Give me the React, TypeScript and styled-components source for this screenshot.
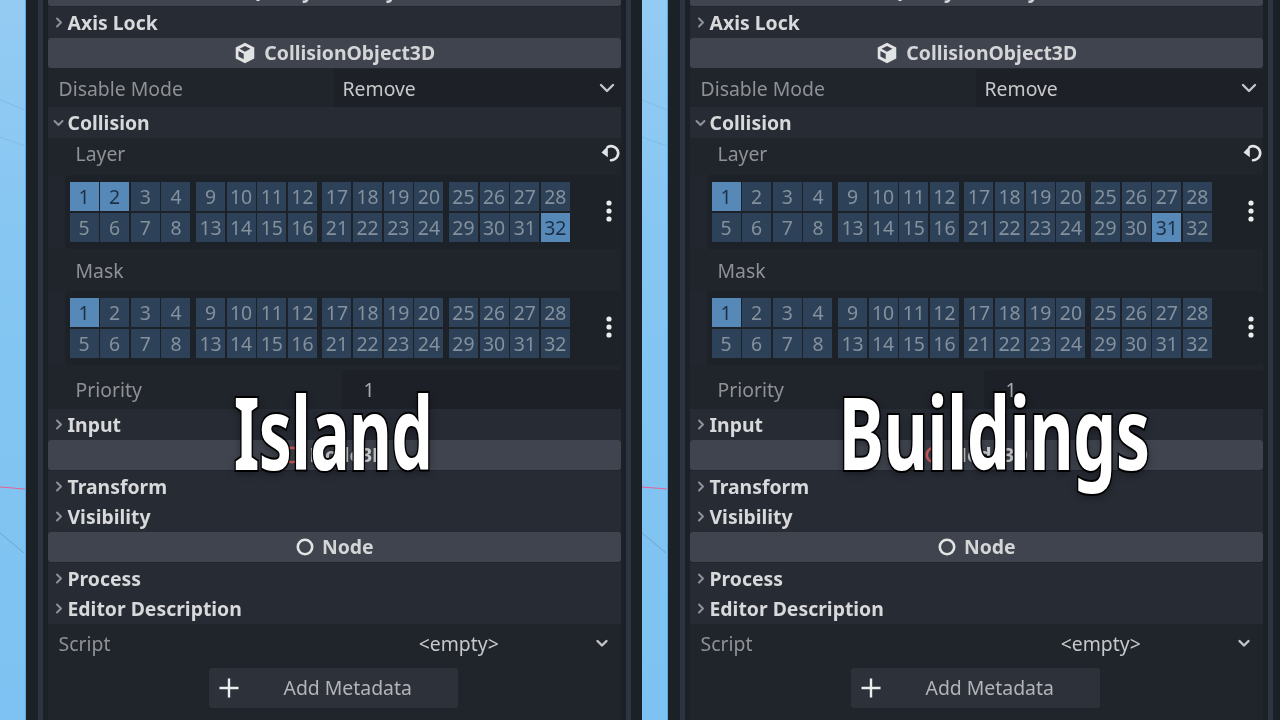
import React from "react";
import styled, { createGlobalStyle } from "styled-components";

const Global = createGlobalStyle`
  html, body { margin: 0; padding: 0; background: #1c2027; }
  body { width: 1280px; height: 720px; overflow: hidden; font-family: "Noto Sans", sans-serif; }
`;

const Page = styled.div`
  display: flex;
  width: 1284px;
  height: 720px;
  overflow: hidden;
`;

const Shot = styled.div`
  position: relative;
  display: flex;
  flex: 0 0 642px;
  height: 720px;
  overflow: hidden;
  background: #1c2027;
`;

const Sky = styled.div`
  position: relative;
  flex: 0 0 25px;
  height: 720px;
  background: linear-gradient(180deg, #94cbf3 0%, #85c6f2 35%, #7dc2f2 100%);
  border-right: 1px solid #5ba9e4;
  box-sizing: border-box;
`;

const SkyLines = styled.svg`
  display: block;
  width: 25px;
  height: 720px;
`;

const Strip = styled.div<{ $ml: number }>`
  flex: 0 0 5px;
  margin-left: ${(p) => p.$ml}px;
  height: 720px;
  background: #2d3542;
`;

const Inspector = styled.div`
  flex: 0 0 573.5px;
  margin-left: 4.5px;
  margin-right: 5px;
  margin-top: -23.6px;
  height: 744px;
  display: flex;
  flex-direction: column;
  background: #22262e;
  filter: blur(0.45px);
`;

const Header = styled.div`
  flex: 0 0 30px;
  margin-bottom: 1px;
  display: flex;
  align-items: center;
  justify-content: center;
  gap: 7px;
  background: #40444e;
  border-radius: 3px;
  color: #d4d5d7;
  font-size: 19.4px;
  font-weight: 700;
  line-height: 30px;
`;

const Section = styled.div`
  flex: 0 0 30.5px;
  display: flex;
  align-items: center;
  background: #272b34;
  color: #d8d9db;
  font-size: 19.4px;
  font-weight: 700;
`;

const Caret = styled.svg`
  flex: 0 0 20px;
  width: 20px;
  height: 19px;
  stroke: #8f9196;
  stroke-width: 2;
  fill: none;
  stroke-linecap: round;
  stroke-linejoin: round;
`;

const Prop = styled.div<{ $h: number; $label?: number; $top?: number }>`
  flex: 0 0 ${(p) => p.$h}px;
  box-sizing: border-box;
  padding-top: ${(p) => p.$top ?? 0}px;
  display: grid;
  grid-template-columns: ${(p) => p.$label ?? 286}px 1fr;
  align-items: stretch;
  background: #20242b;
`;

const PropLabel = styled.div<{ $indent?: number }>`
  display: flex;
  align-items: center;
  padding-left: ${(p) => p.$indent ?? 11}px;
  color: #8f9195;
  font-size: 19.4px;
`;

const PropValue = styled.div`
  display: flex;
  align-items: center;
  position: relative;
  padding-left: 9px;
  background: #1d2027;
  color: #c7c8ca;
  font-size: 19.4px;
  border-radius: 3px;
`;

const NumberValue = styled(PropValue)`
  padding-left: 22px;
  color: #a9aaad;
`;

const ResourceValue = styled(PropValue)`
  justify-content: center;
  padding: 0 37px 0 0;
  background: transparent;
`;

const ValueArrow = styled.svg<{ $right: number }>`
  position: absolute;
  right: ${(p) => p.$right}px;
  top: 50%;
  transform: translateY(-50%);
  width: 16px;
  height: 16px;
  fill: none;
  stroke: #c4c5c8;
  stroke-width: 2.4;
  stroke-linecap: round;
  stroke-linejoin: round;
`;

const LabelRow = styled.div<{ $h: number; $bottom?: number }>`
  flex: 0 0 ${(p) => p.$h}px;
  box-sizing: border-box;
  display: flex;
  align-items: center;
  justify-content: space-between;
  padding: 0 0 ${(p) => p.$bottom ?? 0}px 28px;
  background: #20242b;
  color: #8f9195;
  font-size: 19.4px;
`;

const ResetIcon = styled.svg`
  width: 20px;
  height: 20px;
  fill: none;
  stroke: #e2e3e4;
  stroke-width: 2.6;
  stroke-linecap: round;
`;

const LayerPanel = styled.div`
  flex: 0 0 74px;
  box-sizing: border-box;
  margin-left: 17px;
  display: flex;
  align-items: flex-start;
  padding: 6.5px 0 0 5px;
  background: #1d2128;
  border-radius: 3px;
  position: relative;
`;

const Groups = styled.div`
  display: flex;
  gap: 5.5px;
`;

const Group = styled.div`
  display: grid;
  grid-template-columns: repeat(4, 29px);
  grid-auto-rows: 29px;
  gap: 1.67px;
`;

const Bit = styled.div<{ $on?: boolean }>`
  display: flex;
  align-items: center;
  justify-content: center;
  background: ${(p) => (p.$on ? "#5689b8" : "#2d4259")};
  color: ${(p) => (p.$on ? "#1d2f45" : "#84909c")};
  font-size: 19.4px;
  line-height: 29px;
`;

const Kebab = styled.svg`
  position: absolute;
  right: 4px;
  top: 23px;
  width: 16px;
  height: 26px;
  fill: #eceded;
`;

const AddRow = styled.div`
  flex: 1 0 auto;
  display: flex;
  align-items: flex-start;
  padding: 5px 0 0 161px;
  background: #20242b;
`;

const AddButton = styled.div`
  width: 249px;
  height: 40px;
  display: flex;
  align-items: center;
  box-sizing: border-box;
  background: #2d313a;
  border-radius: 3px;
  color: #b3b4b7;
  font-size: 19.4px;
  padding-left: 8px;
`;

const AddLabel = styled.span`
  margin-left: 43px;
`;

const Plus = styled.svg`
  width: 24px;
  height: 24px;
  stroke: #eceded;
  stroke-width: 2.4;
  fill: none;
  flex: none;
`;

const Title = styled.div<{ $cx: number; $sx: number }>`
  position: absolute;
  left: ${(p) => p.$cx}px;
  top: 371px;
  transform: translateX(-50%) scaleX(${(p) => p.$sx});
  font-family: "Noto Sans", sans-serif;
  font-weight: 700;
  font-size: 100px;
  line-height: 120px;
  letter-spacing: -1px;
  white-space: nowrap;
  color: #ffffff;
  -webkit-text-stroke: 4px #000000;
  paint-order: stroke fill;
  text-shadow: 0 3px 10px rgba(0, 0, 0, 0.45);
`;

const ChevronRight = () => (
  <Caret viewBox="0 0 20 19">
    <path d="M9 5.5 13 9.5 9 13.5" />
  </Caret>
);
const ChevronDown = () => (
  <Caret viewBox="0 0 20 19">
    <path d="M6.5 8 10.5 12 14.5 8" />
  </Caret>
);

const CubeIcon = () => (
  <svg width="24" height="24" viewBox="0 0 22 22">
    <path d="M11 1.5 19.5 6v10L11 20.5 2.5 16V6z" fill="#e2e3e4" />
    <path d="M11 4.6 16 7.2 11 9.8 6 7.2z M5 9.2l4.8 2.5v5L5 14.2z" fill="#40444e" />
  </svg>
);

const RingIcon = ({ color }: { color: string }) => (
  <svg width="20" height="20" viewBox="0 0 20 20">
    <circle cx="10" cy="10" r="7.2" fill="none" stroke={color} strokeWidth="2.6" />
  </svg>
);

const groups = [
  [1, 2, 3, 4, 5, 6, 7, 8],
  [9, 10, 11, 12, 13, 14, 15, 16],
  [17, 18, 19, 20, 21, 22, 23, 24],
  [25, 26, 27, 28, 29, 30, 31, 32],
];

const Layers = ({ on }: { on: number[] }) => (
  <LayerPanel>
    <Groups>
      {groups.map((g, i) => (
        <Group key={i}>
          {g.map((n) => (
            <Bit key={n} $on={on.includes(n)}>
              {n}
            </Bit>
          ))}
        </Group>
      ))}
    </Groups>
    <Kebab viewBox="0 0 16 26">
      <circle cx="8" cy="5" r="2.6" />
      <circle cx="8" cy="13" r="2.6" />
      <circle cx="8" cy="21" r="2.6" />
    </Kebab>
  </LayerPanel>
);

const Panel = ({
  layer,
  title,
  cx,
  sx,
}: {
  layer: number[];
  title: string;
  cx: number;
  sx: number;
}) => (
  <Shot>
    <Sky>
      <SkyLines viewBox="0 0 25 720">
        <path d="M0 487 25 489" stroke="#ea5f92" strokeWidth="1.2" fill="none" />
        <path d="M0 533 24 553" stroke="#6a94b8" strokeWidth="1" fill="none" opacity=".7" />
        <path d="M0 100 25 110M0 137 25 146" stroke="#79b4df" strokeWidth="1" fill="none" opacity=".6" />
      </SkyLines>
    </Sky>
    <Strip $ml={12} />
    <Inspector>
      <Header>
        <CubeIcon />
        PhysicsBody3D
      </Header>
      <Section>
        <ChevronRight />
        Axis Lock
      </Section>
      <Header>
        <CubeIcon />
        CollisionObject3D
      </Header>
      <Prop $h={38.5}>
        <PropLabel>Disable Mode</PropLabel>
        <PropValue>
          Remove
          <ValueArrow $right={6} viewBox="0 0 16 16">
            <path d="M2 5 8 11 14 5" />
          </ValueArrow>
        </PropValue>
      </Prop>
      <Section>
        <ChevronDown />
        Collision
      </Section>
      <LabelRow $h={37.5} $bottom={7}>
        Layer
        <ResetIcon viewBox="0 0 20 20">
          <path d="M6.6 4.2A7 7 0 1 1 10 17.2" />
          <path d="M0.5 9.5 6.8 3v11.2z" fill="#e2e3e4" stroke="none" />
        </ResetIcon>
      </LabelRow>
      <Layers on={layer} />
      <LabelRow $h={42}>Mask</LabelRow>
      <Layers on={[1]} />
      <Prop $h={44} $label={294} $top={5}>
        <PropLabel $indent={28}>Priority</PropLabel>
        <NumberValue>1</NumberValue>
      </Prop>
      <Section>
        <ChevronRight />
        Input
      </Section>
      <Header>
        <RingIcon color="#e0605f" />
        Node3D
      </Header>
      <Section>
        <ChevronRight />
        Transform
      </Section>
      <Section>
        <ChevronRight />
        Visibility
      </Section>
      <Header>
        <RingIcon color="#e2e3e4" />
        Node
      </Header>
      <Section>
        <ChevronRight />
        Process
      </Section>
      <Section>
        <ChevronRight />
        Editor Description
      </Section>
      <Prop $h={39}>
        <PropLabel>Script</PropLabel>
        <ResourceValue>
          &lt;empty&gt;
          <ValueArrow $right={11} viewBox="0 0 16 16">
            <path d="M3.5 6 8 10.5 12.5 6" />
          </ValueArrow>
        </ResourceValue>
      </Prop>
      <AddRow>
        <AddButton>
          <Plus viewBox="0 0 24 24">
            <path d="M12 2.5v19M2.5 12h19" />
          </Plus>
          <AddLabel>Add Metadata</AddLabel>
        </AddButton>
      </AddRow>
    </Inspector>
    <Strip $ml={0} />
    <Title $cx={cx} $sx={sx}>
      {title}
    </Title>
  </Shot>
);

export default function App() {
  return (
    <>
      <Global />
      <Page>
        <Panel layer={[1, 2, 32]} title="Island" cx={333} sx={0.66} />
        <Panel layer={[1, 31]} title="Buildings" cx={352} sx={0.685} />
      </Page>
    </>
  );
}
